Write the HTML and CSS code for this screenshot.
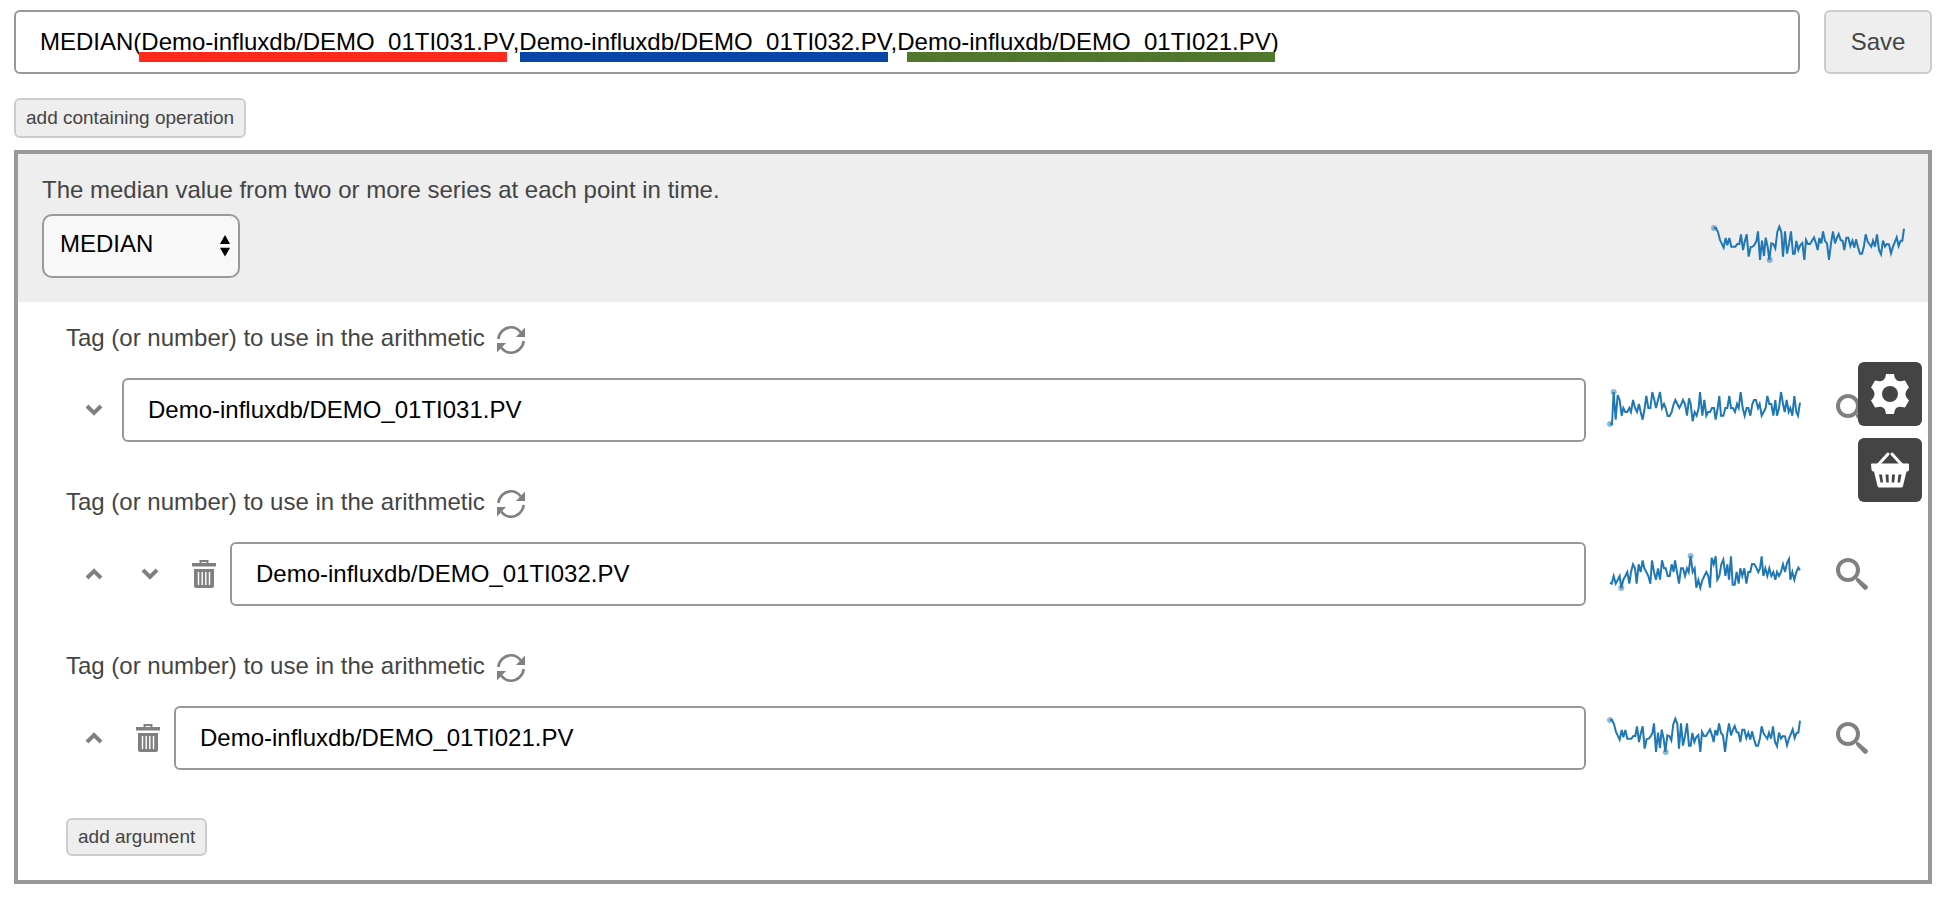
FILE: index.html
```html
<!DOCTYPE html>
<html lang="en">
<head>
    <meta charset="UTF-8">
    <meta name="viewport" content="width=device-width, initial-scale=1.0">
    <title>Calculation Editor</title>
    <link rel="stylesheet" href="styles.css">
</head>
<body>

    <!-- Shared icons and the series used by more than one sparkline -->
    <svg class="sprite" aria-hidden="true">
        <symbol id="icon-refresh" viewBox="0 0 28 28">
            <path d="M1.300 13C2 6.500 7.500 1.300 14 1.300c4.200 0 7.500 2 9.700 5.200M26.700 15C26 21.500 20.500 26.700 14 26.700c-4.200 0-7.500-2-9.700-5.200" fill="none" stroke="currentColor" stroke-width="2.600"/>
            <path d="M28 1.500v9.500h-9zM0 26.500V17h9z" fill="currentColor"/>
        </symbol>
        <symbol id="icon-down" viewBox="0 0 18 12">
            <path d="M2 2l7 7 7-7" fill="none" stroke="currentColor" stroke-width="4"/>
        </symbol>
        <symbol id="icon-up" viewBox="0 0 18 12">
            <path d="M2 10l7-7 7 7" fill="none" stroke="currentColor" stroke-width="4"/>
        </symbol>
        <symbol id="icon-trash" viewBox="0 0 24 28">
            <path d="M8.500 3V1h7v2" fill="none" stroke="currentColor" stroke-width="2"/>
            <path d="M0 3h24v3.500H0zM2 9h20v17a2 2 0 0 1-2 2H4a2 2 0 0 1-2-2z" fill="currentColor"/>
            <path d="M6.500 12v13M10.200 12v13M13.800 12v13M17.500 12v13" stroke="#fff" stroke-width="1.400"/>
        </symbol>
        <symbol id="icon-search" viewBox="0 0 32 32">
            <circle cx="12" cy="12" r="10" fill="none" stroke="currentColor" stroke-width="4"/>
            <path d="M20 20l3 1 8.200 7.200a2.200 2.200 0 0 1-3 3L21 23.500z" fill="currentColor" stroke="currentColor"/>
        </symbol>
        <symbol id="series-021" viewBox="42 48 570 120" overflow="visible">
            <polyline points="42,54 48,54 54,66 60,90 65,100 71,113 77,84 82,106 88,84 94,110 100,110 106,110 112,102 118,102 123,73 129,120 134,96 140,73 146,140 152,111 158,110 163,105 169,94 174,64 180,150 186,92 192,138 197,83 203,110 208,150 214,100 220,102 226,115 232,66 238,50 244,66 249,140 255,64 261,131 267,102 273,64 279,131 284,131 289,93 295,120 301,105 307,99 313,150 318,90 324,102 330,102 336,92 342,82 348,100 353,120 358,84 364,100 369,64 375,93 381,100 387,150 393,100 399,64 405,100 410,85 416,72 422,90 428,93 433,120 439,83 445,83 451,108 457,92 463,113 468,88 474,112 480,131 486,131 492,108 497,73 503,95 508,102 514,110 519,92 525,110 531,73 537,120 543,133 549,92 555,110 561,102 567,103 573,130 579,110 585,95 590,82 596,108 602,92 607,92 612,56"/>
            <circle cx="42" cy="54" r="9"/>
            <circle cx="209" cy="150" r="9"/>
        </symbol>
    </svg>

    <form class="expression">
        <div class="expression-box">
            <input class="text-input" type="text" aria-label="Expression" value="MEDIAN(Demo-influxdb/DEMO_01TI031.PV,Demo-influxdb/DEMO_01TI032.PV,Demo-influxdb/DEMO_01TI021.PV)">
            <div class="marks">
                <span class="mark red"></span>
                <span class="mark blue"></span>
                <span class="mark green"></span>
            </div>
        </div>
        <button class="save-button" type="button">Save</button>
    </form>

    <button class="small-button add-operation" type="button">add containing operation</button>

    <section class="operation">
        <header class="operation-header">
            <label class="description" for="operation">The median value from two or more series at each point in time.</label>
            <div class="operation-row">
                <div class="select-box">
                    <select id="operation">
                        <option>MEDIAN</option>
                    </select>
                    <svg class="select-arrows" viewBox="0 0 12 26" aria-hidden="true"><path d="M0 10.500L6 0l6 10.500zM0 15h12L6 25.500z"/></svg>
                </div>
                <svg class="sparkline"><use href="#series-021"/></svg>
            </div>
        </header>

        <div class="arguments">
            <div class="argument">
                <div class="argument-label">
                    <label for="arg1">Tag (or number) to use in the arithmetic</label>
                    <button class="icon-button" type="button" aria-label="Refresh"><svg class="refresh"><use href="#icon-refresh"/></svg></button>
                </div>
                <div class="argument-row">
                    <div class="tools">
                        <button class="icon-button move" type="button" aria-label="Move down"><svg class="chevron"><use href="#icon-down"/></svg></button>
                    </div>
                    <input class="text-input" id="arg1" type="text" value="Demo-influxdb/DEMO_01TI031.PV">
                    <svg class="sparkline" viewBox="30 30 570 120">
                        <polyline points="30,132 36,132 41,36 47,119 53,45 59,60 65,107 70,84 76,96 82,96 88,84 93,96 99,60 105,84 111,96 117,72 122,96 128,119 134,84 139,48 145,84 151,84 157,36 163,60 168,84 174,60 180,36 186,84 192,72 197,84 203,108 209,108 215,96 221,72 226,60 232,72 238,84 244,72 249,60 255,72 261,107 267,55 272,72 278,124 284,96 290,107 296,84 300,36 307,107 313,60 319,107 324,96 330,96 336,84 342,84 347,119 353,84 358,48 363,107 370,107 376,84 382,84 388,48 393,84 399,84 405,96 411,72 416,84 422,36 428,84 434,107 440,84 445,84 451,107 457,72 462,60 468,60 474,84 479,72 485,107 491,96 497,84 502,48 508,72 514,72 520,107 526,60 531,107 537,84 543,36 549,72 554,96 560,60 566,96 571,84 577,107 583,48 589,96 594,107 600,68"/>
                        <circle cx="30" cy="132" r="9"/>
                        <circle cx="41" cy="36" r="9"/>
                    </svg>
                    <button class="icon-button find" type="button" aria-label="Search"><svg class="search"><use href="#icon-search"/></svg></button>
                </div>
            </div>

            <div class="argument">
                <div class="argument-label">
                    <label for="arg2">Tag (or number) to use in the arithmetic</label>
                    <button class="icon-button" type="button" aria-label="Refresh"><svg class="refresh"><use href="#icon-refresh"/></svg></button>
                </div>
                <div class="argument-row">
                    <div class="tools">
                        <button class="icon-button move" type="button" aria-label="Move up"><svg class="chevron"><use href="#icon-up"/></svg></button>
                        <button class="icon-button move" type="button" aria-label="Move down"><svg class="chevron"><use href="#icon-down"/></svg></button>
                        <button class="icon-button remove" type="button" aria-label="Delete"><svg class="trash"><use href="#icon-trash"/></svg></button>
                    </div>
                    <input class="text-input" id="arg2" type="text" value="Demo-influxdb/DEMO_01TI032.PV">
                    <svg class="sparkline" viewBox="30 27 570 120">
                        <polyline points="30,113 35,116 41,93 47,116 53,105 59,93 64,129 70,104 76,93 82,81 88,116 93,81 99,58 105,70 110,116 116,58 122,81 128,46 133,70 139,81 145,93 151,116 156,46 162,81 168,104 174,70 180,104 186,46 192,70 197,70 203,93 209,93 215,58 221,81 225,46 231,81 237,116 243,70 249,70 255,93 261,70 266,81 272,33 278,81 284,70 289,128 295,105 301,128 307,105 313,93 319,81 325,93 330,128 335,38 341,58 347,34 352,104 358,93 364,58 370,44 376,93 382,58 387,104 393,34 398,119 404,119 410,81 416,116 421,70 427,93 433,70 439,116 445,81 451,81 456,57 462,57 468,66 475,81 480,70 485,34 490,93 496,70 502,93 508,70 514,93 520,81 526,104 531,81 537,93 543,81 549,58 555,81 561,54 567,42 571,104 577,81 583,104 589,81 595,68 600,76"/>
                        <circle cx="64" cy="129" r="9"/>
                        <circle cx="272" cy="33" r="9"/>
                    </svg>
                    <button class="icon-button find" type="button" aria-label="Search"><svg class="search"><use href="#icon-search"/></svg></button>
                </div>
            </div>

            <div class="argument">
                <div class="argument-label">
                    <label for="arg3">Tag (or number) to use in the arithmetic</label>
                    <button class="icon-button" type="button" aria-label="Refresh"><svg class="refresh"><use href="#icon-refresh"/></svg></button>
                </div>
                <div class="argument-row">
                    <div class="tools">
                        <button class="icon-button move" type="button" aria-label="Move up"><svg class="chevron"><use href="#icon-up"/></svg></button>
                        <button class="icon-button remove" type="button" aria-label="Delete"><svg class="trash"><use href="#icon-trash"/></svg></button>
                    </div>
                    <input class="text-input" id="arg3" type="text" value="Demo-influxdb/DEMO_01TI021.PV">
                    <svg class="sparkline"><use href="#series-021"/></svg>
                    <button class="icon-button find" type="button" aria-label="Search"><svg class="search"><use href="#icon-search"/></svg></button>
                </div>
            </div>

            <button class="small-button" type="button">add argument</button>
        </div>
    </section>

    <!-- Floating shortcuts -->
    <div class="side-buttons">
        <button class="side-button" type="button" aria-label="Settings">
            <svg viewBox="0 0 40 40">
                <path fill="#fff" d="M16 0h8l.700 3.500q2 4.500 7 3.500l3.300-.500 4 7-2 2.300q-3 4.200 0 8.400l2 2.300-4 7-3.300-.500q-5-1-7 3.500L24 40h-8l-.700-3.500q-2-4.500-7-3.500L5 33.500l-4-7 2-2.300q3-4.200 0-8.400l-2-2.300 4-7 3.300.500q5 1 7-3.500z"/>
                <circle cx="20" cy="20" r="8" fill="#444"/>
            </svg>
        </button>
        <button class="side-button" type="button" aria-label="Basket">
            <svg viewBox="0 0 40 40">
                <path d="M8 15L18 4M32 15L22 4" stroke="#fff" stroke-width="3" stroke-linecap="round"/>
                <path fill="#fff" d="M2 13.500h36a1 1 0 0 1 1 1v5a2 2 0 0 1-2 2h-.500L33 36a2 2 0 0 1-2 1.500H9.500A2 2 0 0 1 7.500 36L4 21.500h-.500a2 2 0 0 1-2-2L1 14.500a1 1 0 0 1 1-1z"/>
                <path fill="#444" d="M9 24.500h3l1 8h-2.500zM15.500 24.500h3l.300 8h-2.500zM22 24.500h3l-.800 8h-2.500zM28.500 24.500h3l-1.500 8h-2.500z"/>
            </svg>
        </button>
    </div>

</body>
</html>
```

FILE: styles.css
```css
* {
    box-sizing: border-box;
}

body {
    margin: 0;
    padding: 10px 14px;
    background-color: #fff;
    color: #444;
    font-family: "Liberation Sans", Arial, sans-serif;
    font-size: 24px;
    line-height: 24px;
}

button,
input,
select {
    font: inherit;
}

svg {
    display: block;
    overflow: visible;
}

.sprite {
    position: absolute;
    width: 0;
    height: 0;
}

/* Expression bar */
.expression {
    display: flex;
    gap: 24px;
}

.expression-box {
    position: relative;
    flex: 1;
    display: flex;
}

.text-input {
    flex: 1;
    min-width: 0;
    height: 64px;
    padding: 0 24px;
    border: 2px solid #999;
    border-radius: 6px;
    background-color: #fff;
    color: #000;
}

/* Marker strokes under each tag */
.marks {
    position: absolute;
    left: 125px;
    top: 42px;
    display: flex;
    pointer-events: none;
}

.mark {
    width: 368px;
    height: 10px;
}

.red {
    background-color: #ff2a1c;
    margin-right: 13px;
}

.blue {
    background-color: #0845a8;
    margin-right: 19px;
}

.green {
    background-color: #50782c;
}

.save-button,
.small-button {
    border: 2px solid #ccc;
    border-radius: 6px;
    background-color: #eee;
    color: #444;
    cursor: pointer;
}

.save-button {
    width: 108px;
    padding: 0;
}

.small-button {
    display: block;
    padding: 5px 10px;
    font-size: 19px;
}

.add-operation {
    margin: 24px 0 12px;
    padding: 6px 10px;
}

/* Operation panel */
.operation {
    border: 4px solid #999;
}

.operation-header {
    padding: 24px;
    background-color: #eee;
}

.description {
    display: block;
    margin-bottom: 12px;
}

.operation-row {
    display: flex;
    align-items: center;
    justify-content: space-between;
}

.select-box {
    position: relative;
}

.select-box select {
    display: block;
    width: 198px;
    height: 64px;
    padding: 0 36px 4px 16px;
    border: 2px solid #999;
    border-radius: 10px;
    background-color: #f8f8f8;
    color: #000;
    appearance: none;
}

.select-arrows {
    position: absolute;
    right: 9px;
    top: 21px;
    width: 12px;
    height: 22px;
    pointer-events: none;
}

.sparkline {
    flex: none;
    width: 190px;
    height: 40px;
}

.sparkline polyline,
#series-021 polyline {
    fill: none;
    stroke: #1f77b4;
    stroke-width: 6;
}

.sparkline circle,
#series-021 circle {
    fill: #1f77b4;
    fill-opacity: 0.5;
}

/* Arguments */
.arguments {
    padding: 24px 48px;
}

.argument {
    margin-bottom: 48px;
}

.argument-label {
    display: flex;
    gap: 12px;
    margin-bottom: 24px;
}

.argument-row {
    display: flex;
    align-items: center;
}

.argument-row .sparkline {
    margin: 0 24px;
}

.tools {
    display: flex;
}

.icon-button {
    display: flex;
    align-items: center;
    justify-content: center;
    padding: 0;
    border: none;
    background: none;
    color: #808080;
    cursor: pointer;
}

.move,
.find {
    width: 56px;
    height: 56px;
}

.remove {
    width: 52px;
    height: 56px;
}

.refresh {
    width: 28px;
    height: 28px;
}

.chevron {
    width: 18px;
    height: 12px;
}

.trash {
    width: 24px;
    height: 28px;
}

.search {
    width: 32px;
    height: 32px;
}

/* Floating shortcuts */
.side-buttons {
    position: fixed;
    top: 362px;
    right: 24px;
    display: flex;
    flex-direction: column;
    gap: 12px;
}

.side-button {
    display: flex;
    align-items: center;
    justify-content: center;
    width: 64px;
    height: 64px;
    padding: 0;
    border: none;
    border-radius: 6px;
    background-color: #444;
    cursor: pointer;
}

.side-button svg {
    width: 40px;
    height: 40px;
}
```
